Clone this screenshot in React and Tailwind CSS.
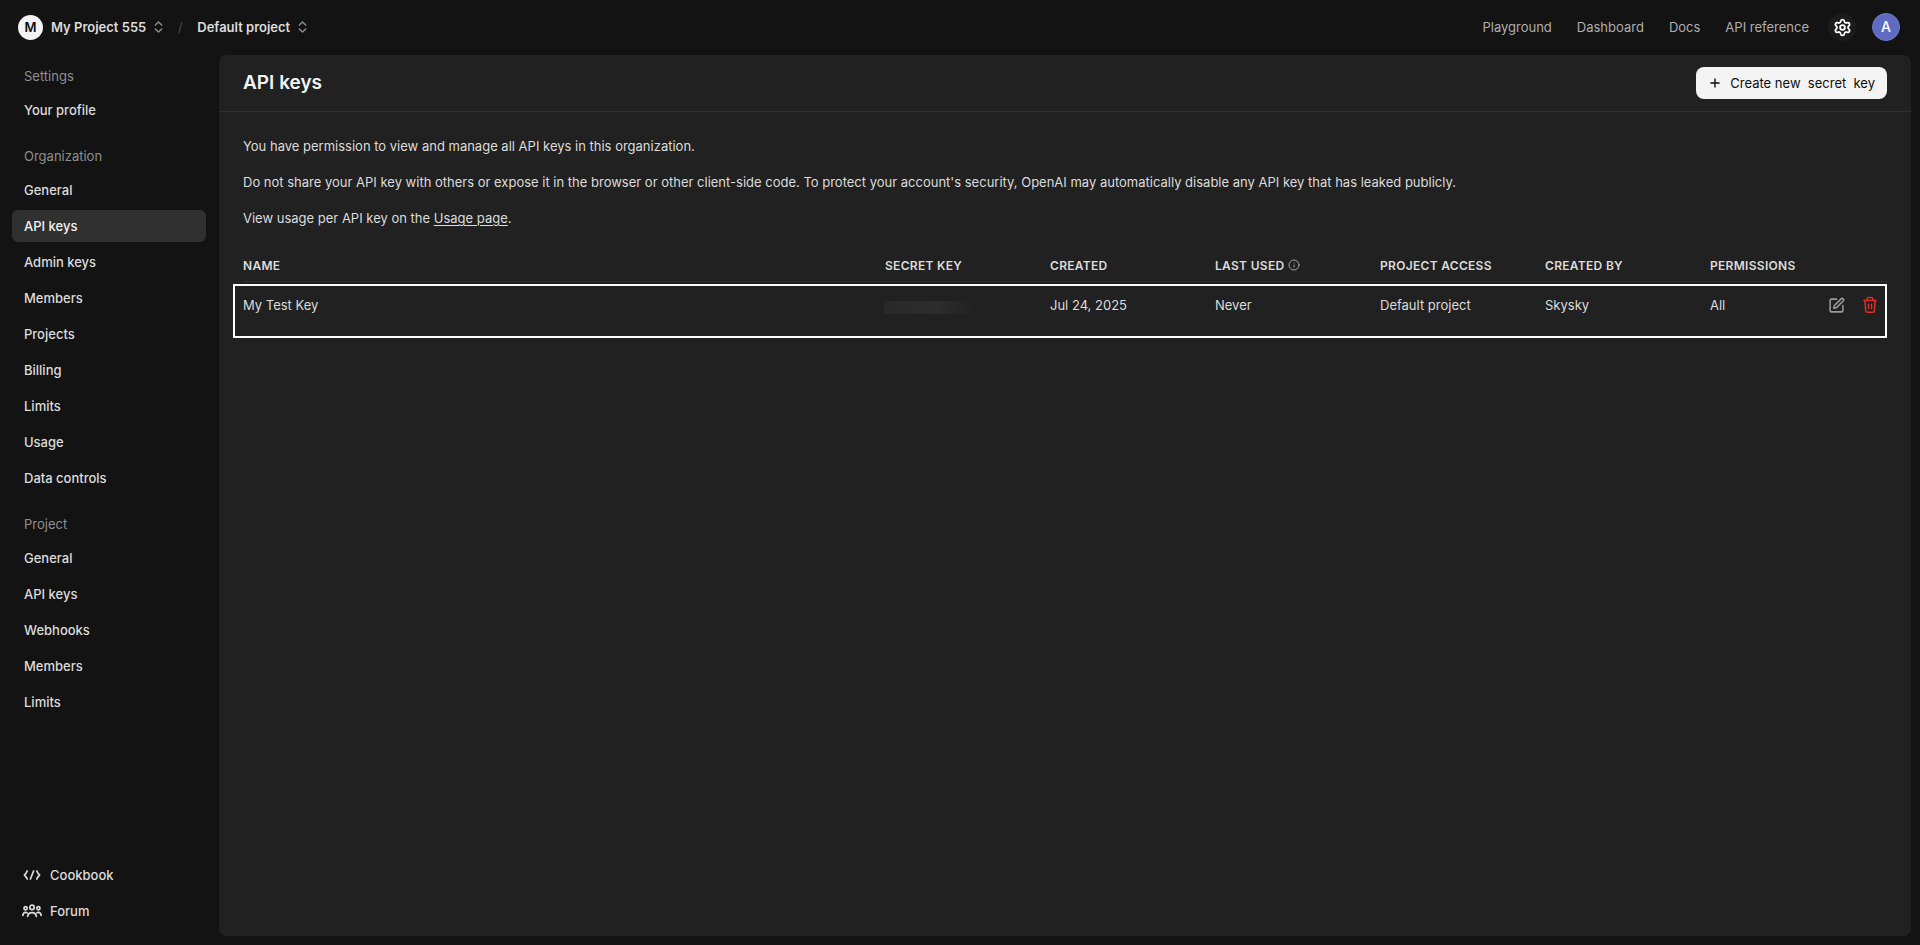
import React from 'react';
import { Info, Plus, Settings, SquarePen } from 'lucide-react';

const NAV_SECTIONS = [
    {
        title: 'Settings',
        items: ['Your profile']
    },
    {
        title: 'Organization',
        items: ['General', 'API keys', 'Admin keys', 'Members', 'Projects', 'Billing', 'Limits', 'Usage', 'Data controls'],
        active: 'API keys'
    },
    {
        title: 'Project',
        items: ['General', 'API keys', 'Webhooks', 'Members', 'Limits']
    }
];

const TOP_LINKS = ['Playground', 'Dashboard', 'Docs', 'API reference'];

const KEYS = [
    {
        name: 'My Test Key',
        created: 'Jul 24, 2025',
        lastUsed: 'Never',
        project: 'Default project',
        createdBy: 'Skysky',
        permissions: 'All'
    }
];

const Selector = () => (
    <svg width="9" height="12" viewBox="0 0 9 12" fill="none" stroke="currentColor" strokeWidth="1.4" strokeLinecap="round" strokeLinejoin="round" className="text-[#8f8f8f]">
        <path d="m1.3 4 3.2-3 3.2 3M1.3 8l3.2 3 3.2-3" />
    </svg>
);

const TrashIcon = () => (
    <svg width="16" height="18" viewBox="0 0 16 18" fill="none" stroke="currentColor" strokeWidth="1.5" strokeLinecap="round" strokeLinejoin="round">
        <path d="M1.8 4.5h12.4M5 4.5V3.2A1.7 1.7 0 0 1 6.7 1.5h2.6A1.7 1.7 0 0 1 11 3.2v1.3" />
        <path d="m2.9 4.5.8 10.2a1.7 1.7 0 0 0 1.7 1.6h5.2a1.7 1.7 0 0 0 1.7-1.6l.8-10.2" />
        <path d="M6.5 8.2v4.3M9.5 8.2v4.3" />
    </svg>
);

const CodeIcon = () => (
    <svg width="20" height="16" viewBox="0 0 20 16" fill="none" stroke="currentColor" strokeWidth="1.7" strokeLinecap="round" strokeLinejoin="round">
        <path d="M5.2 4C4.6 5.6 3.6 7 2.4 8c1.2 1 2.2 2.4 2.8 4M14.8 4c.6 1.6 1.6 3 2.8 4-1.2 1-2.2 2.4-2.8 4M11.6 4l-3.2 8" />
    </svg>
);

const PeopleIcon = () => (
    <svg width="20" height="16" viewBox="0 0 20 16" fill="none" stroke="currentColor" strokeWidth="1.7" strokeLinecap="round" strokeLinejoin="round">
        <circle cx="10" cy="4.4" r="2.2" />
        <circle cx="3.6" cy="5.2" r="1.6" />
        <circle cx="16.4" cy="5.2" r="1.6" />
        <path d="M5.6 13.4c.5-2.3 2.2-3.8 4.4-3.8s3.9 1.5 4.4 3.8" />
        <path d="M.9 12.4c.2-1.7 1.2-3 2.7-3 .7 0 1.2.2 1.6.6M19.1 12.4c-.2-1.7-1.2-3-2.7-3-.7 0-1.2.2-1.6.6" />
    </svg>
);

const TopBar = () => (
    <header className="flex h-[55px] shrink-0 items-center justify-between pb-px pl-[18px] pr-5">
        <div className="flex items-center font-semibold">
            <button className="flex items-center gap-2">
                <span className="flex size-[25px] items-center justify-center rounded-full bg-[#f3f3f3] text-[#0d0d0d]">M</span>
                <span>My Project 555</span>
                <Selector />
            </button>
            <span className="w-[34px] text-center font-normal text-[#4a4a4a]">/</span>
            <button className="flex items-center gap-2">
                <span>Default project</span>
                <Selector />
            </button>
        </div>
        <div className="flex items-center">
            <nav className="mr-[19px] flex gap-[25px] text-[#afafaf]">
                {TOP_LINKS.map((link) => (
                    <a key={link} href="#">{link}</a>
                ))}
            </nav>
            <button aria-label="Settings" className="mr-4 flex size-7 items-center justify-center rounded-full bg-[#1c1c1c] text-white">
                <Settings size={19} strokeWidth={2.3} />
            </button>
            <button className="size-7 rounded-full border border-[#6f7ac8] bg-[#5f6bc0] text-sm font-medium text-white">A</button>
        </div>
    </header>
);

const Sidebar = () => (
    <aside className="flex w-[219px] shrink-0 flex-col justify-between pb-[18px] pl-3 pr-[13px] pt-[11px]">
        <div className="flex flex-col gap-5">
            {NAV_SECTIONS.map((section) => (
                <nav key={section.title}>
                    <h2 className="mb-2 px-3 leading-5 text-[#8f8f8f]">{section.title}</h2>
                    <ul className="flex flex-col gap-1">
                        {section.items.map((item) => (
                            <li key={item}>
                                <a
                                    href="#"
                                    className={`block rounded-md px-3 py-1.5 font-medium leading-5 ${item === section.active ? 'bg-[#303030] text-[#f3f3f3]' : ''}`}
                                >
                                    {item}
                                </a>
                            </li>
                        ))}
                    </ul>
                </nav>
            ))}
        </div>
        <nav className="flex flex-col gap-1 font-medium">
            <a href="#" className="flex h-8 items-center gap-2 px-2.5">
                <CodeIcon />
                Cookbook
            </a>
            <a href="#" className="flex h-8 items-center gap-2 px-2.5">
                <PeopleIcon />
                Forum
            </a>
        </nav>
    </aside>
);

const KeysTable = () => (
    <div className="relative">
        <table className="w-full table-fixed text-left">
            <colgroup>
                <col />
                <col className="w-[165px]" />
                <col className="w-[165px]" />
                <col className="w-[165px]" />
                <col className="w-[165px]" />
                <col className="w-[165px]" />
                <col className="w-[112px]" />
                <col className="w-[65px]" />
            </colgroup>
            <thead>
                <tr className="h-[23px] border-b border-[#303030] align-top text-[12px] uppercase leading-4 tracking-wide [&>th]:p-0 [&>th]:font-semibold">
                    <th>Name</th>
                    <th>Secret key</th>
                    <th>Created</th>
                    <th>
                        <span className="flex gap-1">
                            Last used
                            <Info size={12} strokeWidth={1.8} className="mt-px text-[#afafaf]" />
                        </span>
                    </th>
                    <th>Project access</th>
                    <th>Created by</th>
                    <th>Permissions</th>
                    <th aria-label="Actions" />
                </tr>
            </thead>
            <tbody>
                {KEYS.map((key) => (
                    <tr key={key.name} className="h-[48px] [&>td]:p-0">
                        <td>{key.name}</td>
                        <td>
                            {/* Redacted value */}
                            <div className="-ml-px mt-1 h-[13px] w-[90px] bg-linear-to-r from-[#292929] via-[#2d2d2d] via-60% to-[#212121]" />
                        </td>
                        <td>{key.created}</td>
                        <td>{key.lastUsed}</td>
                        <td>{key.project}</td>
                        <td>{key.createdBy}</td>
                        <td>{key.permissions}</td>
                        <td>
                            <div className="flex items-center justify-end gap-[17px] pr-[9px]">
                                <button aria-label="Edit key" className="text-[#9b9b9b]">
                                    <SquarePen size={17} strokeWidth={2.2} />
                                </button>
                                <button aria-label="Delete key" className="text-[#e02e2a]">
                                    <TrashIcon />
                                </button>
                            </div>
                        </td>
                    </tr>
                ))}
            </tbody>
        </table>
        <div className="pointer-events-none absolute -left-2.5 right-0 top-[26px] h-[54px] border-2 border-white" />
    </div>
);

export default function App() {
    return (
        <div className="flex min-h-screen flex-col bg-[#131313] font-['Inter',sans-serif] text-[13px] leading-5 text-[#dcdcdc]">
            <TopBar />
            <div className="flex flex-1">
                <Sidebar />
                <main className="mb-[9px] mr-[9px] min-w-0 flex-1 rounded-lg bg-[#212121]">
                    <div className="flex h-[57px] items-center justify-between border-b border-[#303030] px-6">
                        <h1 className="text-[19px] font-semibold leading-6 text-[#f3f3f3]">API keys</h1>
                        <button className="flex h-8 items-center gap-2 whitespace-pre rounded-lg bg-[#f3f3f3] px-3 text-[#0d0d0d]">
                            <Plus size={14} strokeWidth={2.4} />
                            {'Create new  secret  key'}
                        </button>
                    </div>
                    <div className="px-6 pt-6">
                        <div className="mb-[30px] flex flex-col gap-4">
                            <p>You have permission to view and manage all API keys in this organization.</p>
                            <p>Do not share your API key with others or expose it in the browser or other client-side code. To protect your account's security, OpenAI may automatically disable any API key that has leaked publicly.</p>
                            <p>View usage per API key on the <a href="#" className="underline underline-offset-2">Usage page</a>.</p>
                        </div>
                        <KeysTable />
                    </div>
                </main>
            </div>
        </div>
    );
}
